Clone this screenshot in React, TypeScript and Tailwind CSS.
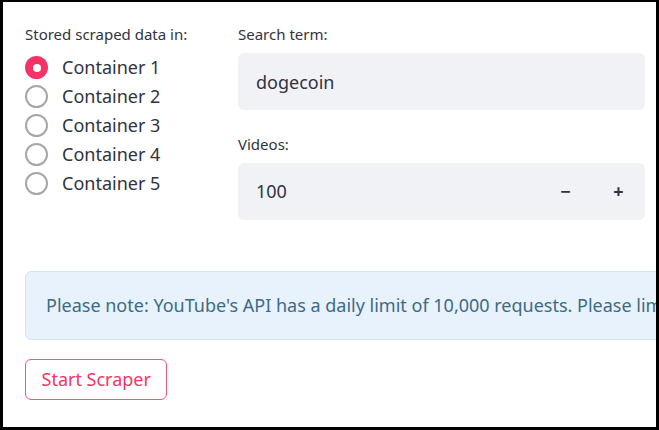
import { useState } from 'react'

const containers = ['Container 1', 'Container 2', 'Container 3', 'Container 4', 'Container 5']

const Radio = ({ checked }: { checked: boolean }): React.JSX.Element =>
  checked ? (
    <span className="flex h-[23px] w-[23px] shrink-0 items-center justify-center rounded-full bg-[#f63366]">
      <span className="h-[8px] w-[8px] rounded-full bg-white" />
    </span>
  ) : (
    <span className="h-[23px] w-[23px] shrink-0 rounded-full border-[2.5px] border-[#a6a6a6] bg-white" />
  )

export default function App(): React.JSX.Element {
  const [selected, setSelected] = useState(0)
  const [term, setTerm] = useState('dogecoin')
  const [videos, setVideos] = useState(100)

  return (
    <div
      className="h-[430px] w-[659px] overflow-hidden border-t-2 border-r-[3px] border-b-[3px] border-l-[3px] border-black bg-white text-[#31333f]"
      style={{ fontFamily: '"Noto Sans", sans-serif' }}
    >
      <div className="w-[760px] pt-[22px] pl-[22px]">
        <div className="flex gap-[23px]">
          {/* left column */}
          <div className="w-[190px]">
            <p className="text-[15px] leading-[20px]">Stored scraped data in:</p>
            <div className="mt-[12px] flex flex-col gap-[6px]">
              {containers.map((c, i) => (
                <button
                  key={c}
                  onClick={() => setSelected(i)}
                  className="flex h-[23px] items-center gap-[14px] text-left"
                >
                  <Radio checked={selected === i} />
                  <span className="text-[18px] leading-[23px]">{c}</span>
                </button>
              ))}
            </div>
          </div>

          {/* right column */}
          <div className="w-[407px]">
            <p className="text-[15px] leading-[20px]">Search term:</p>
            <input
              value={term}
              onChange={(e) => setTerm(e.target.value)}
              className="mt-[9px] h-[57px] w-full rounded-[6px] bg-[#f0f2f6] px-[18px] text-[18px] outline-none"
            />
            <p className="mt-[24px] text-[15px] leading-[20px]">Videos:</p>
            <div className="mt-[9px] flex h-[57px] w-full items-center rounded-[6px] bg-[#f0f2f6]">
              <span className="flex-1 pl-[18px] text-[18px]">{videos}</span>
              <button
                onClick={() => setVideos((v) => v - 1)}
                className="flex h-full w-[53px] items-center justify-center text-[18px] font-bold"
              >
                −
              </button>
              <button
                onClick={() => setVideos((v) => v + 1)}
                className="flex h-full w-[53px] items-center justify-center text-[18px] font-bold"
              >
                +
              </button>
            </div>
          </div>
        </div>

        <div className="mt-[51px] flex h-[69px] w-[700px] items-center overflow-hidden rounded-[6px] border border-[#d2e6fb] bg-[#e8f2fc] px-[20px]">
          <p className="whitespace-nowrap text-[18px] text-[#3c6b88]">
            Please note: YouTube's API has a daily limit of 10,000 requests. Please limit your
            scraping accordingly.
          </p>
        </div>

        <button className="mt-[19px] h-[41px] rounded-[6px] border border-[#f6557d] bg-white px-[15.5px] text-[18px] text-[#f63366]">
          Start Scraper
        </button>
      </div>
    </div>
  )
}
